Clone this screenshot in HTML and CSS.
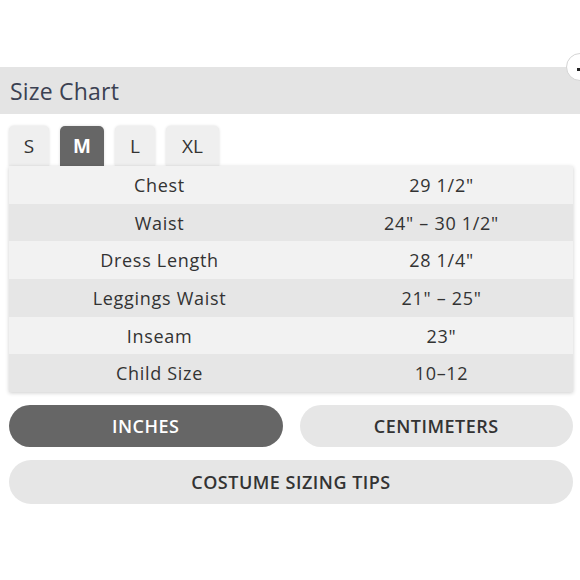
FILE: index.html
```html
<!DOCTYPE html>
<html>
<head>
<meta charset="utf-8">
<link rel="stylesheet" href="styles.css">
</head>
<body>
<div class="modal">
  <div class="header">
    <h1 class="title">Size Chart</h1>
    <span class="close"></span>
  </div>
  <div class="content">
    <div class="tabs">
      <div class="tab">S</div>
      <div class="tab active">M</div>
      <div class="tab">L</div>
      <div class="tab tab-xl">XL</div>
    </div>
    <div class="table">
      <div class="row"><div class="cell label">Chest</div><div class="cell value">29 1/2"</div></div>
      <div class="row alt"><div class="cell label">Waist</div><div class="cell value">24" – 30 1/2"</div></div>
      <div class="row"><div class="cell label">Dress Length</div><div class="cell value">28 1/4"</div></div>
      <div class="row alt"><div class="cell label">Leggings Waist</div><div class="cell value">21" – 25"</div></div>
      <div class="row"><div class="cell label">Inseam</div><div class="cell value">23"</div></div>
      <div class="row alt"><div class="cell label">Child Size</div><div class="cell value">10–12</div></div>
    </div>
    <div class="units">
      <button class="btn btn-dark">INCHES</button>
      <button class="btn">CENTIMETERS</button>
    </div>
    <button class="btn btn-wide">COSTUME SIZING TIPS</button>
  </div>
</div>
</body>
</html>
```
FILE: styles.css
```css
* { box-sizing: border-box; }
html, body { margin: 0; padding: 0; background: #fff; }
body {
  font-family: "Open Sans", "Liberation Sans", sans-serif;
  color: #333;
}
.modal { padding-top: 67px; }
.header {
  position: relative;
  height: 47px;
  background: #e4e4e4;
  display: flex;
  align-items: center;
  padding-left: 10px;
}
.title {
  margin: 0;
  font-size: 23px;
  font-weight: 500;
  color: #3b4152;
  letter-spacing: 0.2px;
}
.close {
  position: absolute;
  right: -14px;
  top: -14px;
  width: 28px;
  height: 28px;
  border-radius: 50%;
  background: #fff;
  border: 1px solid #d4d4d4;
}
.close::after {
  content: "";
  position: absolute;
  left: 10px;
  top: 14px;
  width: 3px;
  height: 3px;
  background: #222;
}
.content { padding: 12px 7px 0 9px; }
.tabs { display: flex; gap: 11px; height: 40px; }
.tab {
  width: 40px;
  height: 40px;
  display: flex;
  align-items: center;
  justify-content: center;
  background: #efefef;
  border-radius: 5px 5px 0 0;
  box-shadow: 0 0 3px rgba(0,0,0,0.15);
  font-size: 19px;
  color: #333;
}
.tab.active {
  width: 44px;
  background: #666;
  color: #fff;
  font-weight: 700;
}
.tab-xl { width: 53px; }
.table {
  position: relative;
  box-shadow: 0 1px 4px rgba(0,0,0,0.2);
}
.row {
  display: grid;
  grid-template-columns: 301px 1fr;
  height: 37.7px;
  background: #f2f2f2;
}
.row.alt { background: #e6e6e6; }
.cell {
  display: flex;
  align-items: center;
  justify-content: center;
  font-size: 18px;
  letter-spacing: 0.7px;
  color: #333;
}
.units {
  display: grid;
  grid-template-columns: 1fr 1fr;
  gap: 17px;
  margin-top: 13px;
}
.btn {
  font-family: inherit;
  border: none;
  height: 42px;
  border-radius: 21px;
  background: #e6e6e6;
  color: #333;
  font-size: 18px;
  font-weight: 600;
  letter-spacing: 0.5px;
  padding: 0;
}
.btn-dark { background: #666; color: #fff; }
.btn-wide {
  display: block;
  width: 100%;
  height: 44px;
  border-radius: 22px;
  margin-top: 13px;
}
```
